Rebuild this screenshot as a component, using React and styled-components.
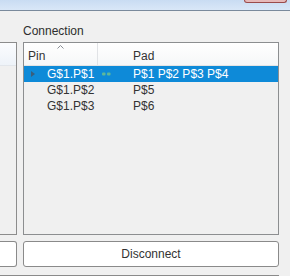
import React from "react";
import styled, { createGlobalStyle } from "styled-components";

const GlobalStyle = createGlobalStyle`
  body {
    margin: 0;
    background: #f0f0f0;
    font-family: "Liberation Sans", Arial, sans-serif;
    font-size: 12px;
    color: #333;
  }
`;

const SWindow = styled.div`
  width: 290px;
  height: 276px;
  overflow: hidden;
  display: flex;
  flex-direction: column;
  background: #f0f0f0;
`;

const STitleBar = styled.div`
  height: 10px;
  flex-shrink: 0;
  display: flex;
  justify-content: flex-end;
  padding-right: 3px;
  background: linear-gradient(#c9dcf2, #d9e7f7);
  border-bottom: 1px solid #7a8a9c;
`;

const SCloseButton = styled.div`
  width: 41px;
  height: 2px;
  border: 1px solid #9a4b4b;
  border-top: none;
  border-radius: 0 0 3px 3px;
  background: #e6b9b9;
`;

const SBody = styled.div`
  display: grid;
  grid-template-columns: 17px 256px;
  grid-template-rows: 31px 193px 32px;
  column-gap: 6px;
`;

const SLabel = styled.div`
  grid-column: 2;
  grid-row: 1;
  padding-top: 13px;
  line-height: 15px;
  color: #2e2e2e;
`;

const SSidePanel = styled.div`
  grid-column: 1;
  grid-row: 2;
  border: 1px solid #8c8c8c;
  border-left: none;
  display: flex;
  flex-direction: column;
`;

const SSideHeader = styled.div`
  height: 22px;
  background: linear-gradient(#fbfcfe, #eef3f9);
  border-bottom: 1px solid #e2e6eb;
`;

const STable = styled.div`
  grid-column: 2;
  grid-row: 2;
  border: 1px solid #8c8e90;
  display: flex;
  flex-direction: column;
`;

const SHeader = styled.div`
  height: 22px;
  display: grid;
  grid-template-columns: 74px 31px 1fr;
  background: linear-gradient(#ffffff, #f6f7f8);
  border-bottom: 1px solid #e4e4e4;
`;

const SHeadCell = styled.div`
  position: relative;
  padding: 6px 0 0 4px;
  line-height: 15px;
  border-right: ${(p) => (p.$sep ? "1px solid #e1e3e6" : "none")};
`;

const SSortArrow = styled.svg`
  position: absolute;
  left: 33px;
  top: 2px;
`;

const SRow = styled.div`
  height: 16px;
  display: grid;
  grid-template-columns: 74px 31px 1fr;
  align-items: center;
  line-height: 16px;
  background: ${(p) => (p.$selected ? "#0e8ad8" : "transparent")};
  color: ${(p) => (p.$selected ? "#fff" : "#333")};
`;

const SPinCell = styled.div`
  display: flex;
  align-items: center;
  padding-left: 7px;
  white-space: nowrap;
`;

const SExpander = styled.span`
  width: 0;
  height: 0;
  border-top: 3.5px solid transparent;
  border-bottom: 3.5px solid transparent;
  border-left: 4px solid ${(p) => (p.$show ? "#3a5f7c" : "transparent")};
  margin-right: 12px;
`;

const SIconCell = styled.div`
  display: flex;
  align-items: center;
  padding-left: 4px;
`;

const SPadCell = styled.div`
  padding-left: 4px;
  white-space: nowrap;
`;

const SSideButton = styled.div`
  grid-column: 1;
  grid-row: 3;
  margin-top: 6px;
  height: 24px;
  background: #fff;
  border: 1px solid #8a8a8a;
  border-left: none;
  border-radius: 0 3px 3px 0;
`;

const SButton = styled.button`
  grid-column: 2;
  grid-row: 3;
  margin-top: 6px;
  height: 26px;
  padding: 0;
  background: #fff;
  border: 1px solid #8a8a8a;
  border-radius: 3px;
  font-family: inherit;
  font-size: 12px;
  color: #333;
`;

const SFooter = styled.div`
  margin-top: 8px;
  width: 278px;
  height: 10px;
  flex-shrink: 0;
  border: 1px solid #8a8a8a;
  border-left: none;
  border-bottom: none;
`;

const rows = [
  { pin: "G$1.P$1", pad: "P$1 P$2 P$3 P$4", selected: true, link: true },
  { pin: "G$1.P$2", pad: "P$5" },
  { pin: "G$1.P$3", pad: "P$6" },
];

const LinkIcon = () => (
  <svg width="9" height="4" viewBox="0 0 9 4">
    <rect x="0" y="0.5" width="3.5" height="3" rx="1" fill="#5fb89a" />
    <rect x="5" y="0.5" width="3.5" height="3" rx="1" fill="#5fb89a" />
  </svg>
);

export default function App() {
  return (
    <SWindow>
      <GlobalStyle />
      <STitleBar>
        <SCloseButton />
      </STitleBar>
      <SBody>
        <SLabel>Connection</SLabel>
        <SSidePanel>
          <SSideHeader />
        </SSidePanel>
        <STable>
          <SHeader>
            <SHeadCell $sep>
              Pin
              <SSortArrow width="7" height="4" viewBox="0 0 7 4">
                <path d="M0.5 3.5 L3.5 0.5 L6.5 3.5" fill="none" stroke="#8a8f96" strokeWidth="1" />
              </SSortArrow>
            </SHeadCell>
            <SHeadCell />
            <SHeadCell>Pad</SHeadCell>
          </SHeader>
          {rows.map((r) => (
            <SRow key={r.pin} $selected={r.selected}>
              <SPinCell>
                <SExpander $show={r.selected} />
                {r.pin}
              </SPinCell>
              <SIconCell>{r.link && <LinkIcon />}</SIconCell>
              <SPadCell>{r.pad}</SPadCell>
            </SRow>
          ))}
        </STable>
        <SSideButton />
        <SButton>Disconnect</SButton>
      </SBody>
      <SFooter />
    </SWindow>
  );
}
